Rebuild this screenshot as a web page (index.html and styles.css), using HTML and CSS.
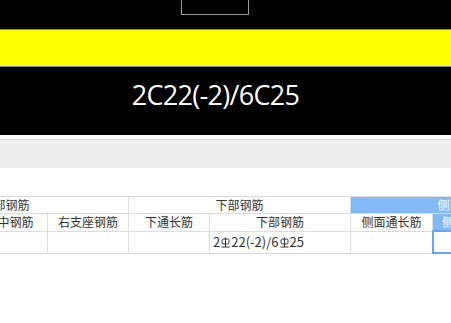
FILE: index.html
```html
<!DOCTYPE html>
<html lang="zh-CN">
  <head>
    <meta charset="UTF-8" />
    <meta name="viewport" content="width=device-width, initial-scale=1.0" />
    <title>Beam rebar</title>
    <link rel="stylesheet" href="styles.css">
  </head>
  <body>
    <div class="drawing">
      <div class="frame"></div>
      <div class="beam"></div>
      <div class="label">2C22(-2)/6C25</div>
    </div>
    <div class="toolbar"></div>

    <table class="grid">
      <colgroup>
        <col style="width: 89px" />
        <col style="width: 76px" />
        <col style="width: 81px" />
        <col style="width: 81px" />
        <col style="width: 141px" />
        <col style="width: 82px" />
        <col style="width: 140px" />
      </colgroup>
      <tr class="group-row">
        <th colspan="3">上部钢筋</th>
        <th colspan="2">下部钢筋</th>
        <th colspan="2" class="active">侧面钢筋</th>
      </tr>
      <tr class="head-row">
        <th>左支座钢筋</th>
        <th>跨中钢筋</th>
        <th>右支座钢筋</th>
        <th>下通长筋</th>
        <th>下部钢筋</th>
        <th>侧面通长筋</th>
        <th class="active left">侧面原位标注筋</th>
      </tr>
      <tr class="data-row">
        <td></td>
        <td></td>
        <td></td>
        <td></td>
        <td class="value">2<svg class="bar" viewBox="0 0 9 11"><rect x="1" y="2" width="7" height="5" rx="1.5"/><path d="M4.5 0.5V10M0.5 10H8.5"/></svg>22(-2)/6<svg class="bar" viewBox="0 0 9 11"><rect x="1" y="2" width="7" height="5" rx="1.5"/><path d="M4.5 0.5V10M0.5 10H8.5"/></svg>25</td>
        <td></td>
        <td class="selected"></td>
      </tr>
    </table>
  </body>
</html>
```

FILE: styles.css
```css
body {
  margin: 0;
  width: 451px;
  height: 323px;
  overflow: hidden;
  background-color: #fff;
  font-family: "Noto Sans CJK SC", "Noto Sans", sans-serif;
}

.drawing {
  height: 135px;
  background-color: #000;
  overflow: hidden;
}

.drawing .frame {
  width: 66px;
  height: 14px;
  margin-left: 181px;
  border: 1px solid #9a9a9a;
  border-top: none;
}

.drawing .beam {
  height: 36px;
  margin-top: 14px;
  background-color: #ffff00;
  border-top: 1px solid #6f8fb0;
  border-bottom: 1px solid #6f8fb0;
}

.drawing .label {
  padding-top: 13px;
  padding-right: 20px;
  color: #fff;
  font-family: "Open Sans", sans-serif;
  font-size: 27px;
  line-height: 30px;
  letter-spacing: -0.7px;
  text-align: center;
}

.toolbar {
  height: 28px;
  margin-top: 4px;
  background-color: #eeeeef;
  border-top: 1px solid #dedede;
}

.grid {
  margin-top: 28px;
  margin-left: -118px;
  border-collapse: collapse;
  table-layout: fixed;
  width: 690px;
  font-size: 12px;
  color: #333;
}

.grid th,
.grid td {
  border: 1px solid #dcdcdc;
  padding: 0;
  font-weight: normal;
  text-align: center;
  white-space: nowrap;
  overflow: hidden;
}

.grid .group-row th,
.grid .head-row th {
  height: 16px;
  line-height: 16px;
}

.grid .data-row td {
  height: 20px;
  line-height: 20px;
}

.grid .active {
  background-color: #80b9f6;
  color: #fff;
}

.grid .left {
  text-align: left;
  padding-left: 9px;
}

.grid .value {
  text-align: left;
  padding-left: 3px;
  font-size: 13px;
}

.grid .bar {
  width: 9px;
  height: 11px;
  margin: 0 1px;
  vertical-align: -1px;
  fill: none;
  stroke: #333;
  stroke-width: 1;
}

.grid .selected {
  border: 2px solid #6aa6f2;
}
```
